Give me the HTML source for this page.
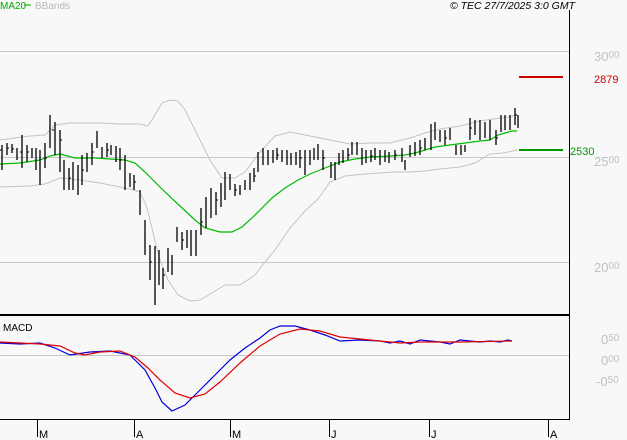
<!DOCTYPE html>
<html><head><meta charset="utf-8"><style>
html,body{margin:0;padding:0;background:#f8f8f8;}
svg{display:block;font-family:"Liberation Sans",sans-serif;}
</style></head><body>
<svg width="627" height="440" viewBox="0 0 627 440">
<rect width="627" height="440" fill="#f8f8f8"/>
<g stroke="#c8c8c8" stroke-width="1">
<line x1="0" y1="51.5" x2="569" y2="51.5"/>
<line x1="0" y1="157.5" x2="569" y2="157.5"/>
<line x1="0" y1="262.5" x2="569" y2="262.5"/>
<line x1="0" y1="355.5" x2="569" y2="355.5"/>
</g>
<g fill="none" stroke="#c4c4c4" stroke-width="1">
<polyline points="0,140 30,136 45,135 55,125 70,123 100,123 120,124 140,124 148,126 155,115 162,103 170,100 178,101 185,110 195,130 210,160 222,178 235,178 245,172 260,152 275,136 290,132 305,135 320,138 335,141 350,144 370,143 390,143 410,138 425,133 440,129 460,126 480,121 500,118 510,117 517,114"/>
<polyline points="0,187 30,186 45,184 60,178 80,180 100,183 120,187 130,189 140,192 146,205 150,220 156,245 160,260 168,280 178,295 190,301 200,300 210,294 225,285 240,285 255,275 265,262 275,250 290,228 305,211 318,199 330,182 345,176 365,174 380,173 395,172 410,172 425,171 440,169 460,167 475,163 483,158 490,154 503,153 517,150"/>
</g>
<polyline fill="none" stroke="#00bb00" stroke-width="1.2" points="0,164 20,163 40,160 50,156 60,154 75,158 95,158 110,159 125,160 135,163 145,172 155,182 165,192 180,206 195,220 205,228 220,232 232,232 242,227 252,218 262,208 272,198 285,188 298,180 310,174 320,170 330,166 340,162 355,159 370,157 390,156 405,155 415,153 425,150 435,147 450,145 465,143 480,141 490,140 498,135 505,133 512,131 517,131"/>
<path fill="none" stroke="#000" stroke-width="1.3" d="
M2 145V170 M7 143V155 M12 144V153 M17 148V160 M22 135V168 M27 145V162 M32 148V158 M36 148V170 M40 150V185 M45 143V168 M50 115V148 M55 122V155 M60 130V172 M64 160V190 M69 168V190 M73 162V190 M78 165V195 M82 155V185 M87 153V172 M92 143V165 M97 131V148 M102 147V158 M107 143V157 M111 145V155 M116 146V162 M120 148V170 M125 155V190 M130 173V187 M134 175V190 M140 190V215 M145 220V255 M150 245V280 M155 246V305 M159 250V285 M163 268V289 M168 248V272 M172 255V275 M177 227V242 M182 232V250 M187 230V248 M191 230V256 M196 230V256 M201 208V235 M206 197V228 M211 188V218 M216 192V215 M221 183V207 M225 172V200 M230 174V190 M235 184V196 M240 185V195 M245 180V190 M250 173V190 M254 168V182 M258 152V172 M263 148V165 M268 150V165 M273 150V163 M277 148V160 M282 150V162 M287 150V165 M291 153V165 M296 152V165 M300 150V168 M305 150V175 M310 150V165 M314 148V160 M318 144V160 M323 150V170 M331 162V178 M335 162V180 M339 153V165 M343 150V163 M348 148V160 M352 142V155 M357 142V155 M362 148V165 M366 150V163 M371 150V162 M375 148V160 M380 150V165 M385 150V162 M389 152V163 M395 150V160 M402 148V162 M405 160V170 M410 145V157 M415 142V156 M420 140V155 M425 138V150 M431 124V150 M435 122V140 M440 130V142 M445 130V145 M450 128V140 M456 145V155 M461 145V155 M465 145V152 M470 118V140 M475 120V135 M480 120V140 M485 122V138 M490 120V140 M496 130V145 M501 115V132 M505 115V130 M510 115V130 M515 108V125 M518 115V128"/>
<path fill="none" stroke="#000" stroke-width="1" d="M0 150h2 M7 148h2 M12 149h2 M20 152h2 M27 152h2 M45 158h2 M52 130h2 M60 140h2 M69 178h2 M82 170h2 M92 152h2 M107 150h2 M120 160h2 M134 182h2 M150 262h2 M163 275h2 M182 240h2 M201 222h2 M216 200h2 M235 190h2 M254 176h2 M277 155h2 M300 158h2 M323 158h2 M348 155h2 M371 156h2 M395 155h2 M420 148h2 M445 138h2 M470 128h2 M496 138h2 M515 115h2"/>
<line x1="519" y1="77" x2="563" y2="77" stroke="#cc0000" stroke-width="2"/>
<line x1="519" y1="150" x2="563" y2="150" stroke="#009900" stroke-width="2"/>
<polyline fill="none" stroke="#0000dd" stroke-width="1.2" points="0,343 20,344 40,343 55,348 70,355 90,352 110,351 130,355 145,370 155,388 162,402 172,411 185,405 200,390 215,375 230,360 245,348 260,338 270,330 280,326 295,326 310,330 325,335 340,341 360,340 380,341 390,343 400,341 410,344 420,340 430,341 440,342 450,344 460,340 480,342 490,341 500,342 508,340 512,341"/>
<polyline fill="none" stroke="#dd0000" stroke-width="1.2" points="0,342 40,344 60,346 75,353 85,355 100,352 120,351 135,357 148,368 160,380 175,393 190,398 205,394 220,382 240,363 260,346 280,334 300,329 320,331 340,337 360,339 380,341 400,343 420,342 460,342 512,341"/>
<rect x="0" y="314" width="570" height="2" fill="#000"/>
<line x1="569.5" y1="10" x2="569.5" y2="420" stroke="#000" stroke-width="1"/>
<line x1="0" y1="419.5" x2="570" y2="419.5" stroke="#000" stroke-width="1"/>
<g stroke="#000" stroke-width="1">
<line x1="37.5" y1="419" x2="37.5" y2="437"/>
<line x1="134.5" y1="419" x2="134.5" y2="437"/>
<line x1="230.5" y1="419" x2="230.5" y2="437"/>
<line x1="329.5" y1="419" x2="329.5" y2="437"/>
<line x1="429.5" y1="419" x2="429.5" y2="437"/>
<line x1="548.5" y1="419" x2="548.5" y2="437"/>
</g>
<g font-size="11" fill="#000">
<text x="39" y="438">M</text><text x="136" y="438">A</text><text x="232" y="438">M</text>
<text x="331" y="438">J</text><text x="431" y="438">J</text><text x="550" y="438">A</text>
</g>
<g font-size="13" fill="#c0c0c0">
<text x="594" y="61">30<tspan font-size="10" dy="-3">00</tspan></text>
<text x="594" y="166">25<tspan font-size="10" dy="-3">00</tspan></text>
<text x="594" y="272">20<tspan font-size="10" dy="-3">00</tspan></text>
<text x="601" y="344">0<tspan font-size="10" dy="-3">50</tspan></text>
<text x="601" y="365">0<tspan font-size="10" dy="-3">00</tspan></text>
<text x="596" y="386">-0<tspan font-size="10" dy="-3">50</tspan></text>
</g>
<text x="594" y="83" font-size="11" fill="#cc0000">2879</text>
<text x="570" y="155" font-size="11" fill="#009900">2530</text>
<text x="0" y="9" font-size="10" fill="#00aa00">MA20</text>
<line x1="24" y1="5" x2="31" y2="5" stroke="#00aa00"/>
<text x="35" y="9" font-size="10" fill="#bbb">BBands</text>
<line x1="60" y1="5" x2="67" y2="5" stroke="#ccc"/>
<text x="3" y="331" font-size="10" fill="#000">MACD</text>
<text x="575" y="9" font-size="10.5" font-style="italic" fill="#000" text-anchor="end">© TEC 27/7/2025 3:0 GMT</text>
</svg>
</body></html>
